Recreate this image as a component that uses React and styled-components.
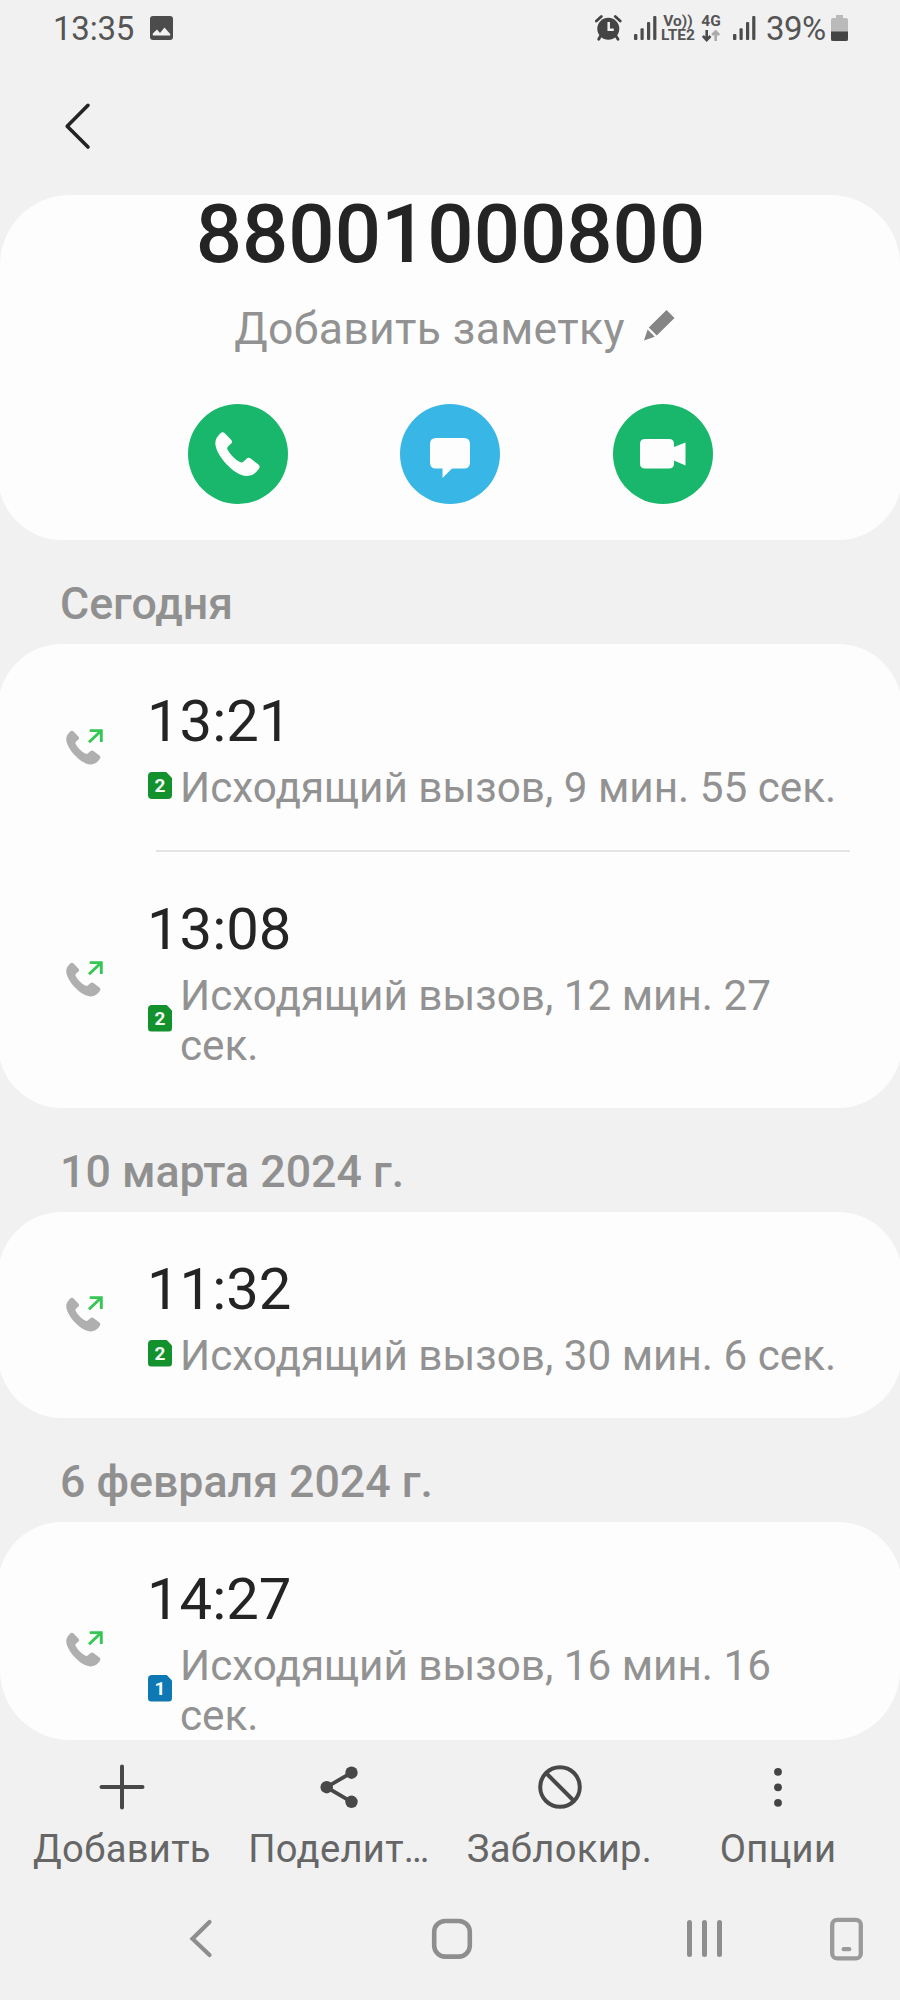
import React from 'react'
import styled, { createGlobalStyle } from 'styled-components'

const GlobalStyle = createGlobalStyle`
    * {
        box-sizing: border-box;
    }

    body {
        margin: 0;
        background: #f1f1f1;
        font-family: Roboto, 'Liberation Sans', sans-serif;
    }

    p, h1, h2 {
        margin: 0;
    }

    svg {
        display: block;
        flex: none;
    }

    button {
        border: none;
        padding: 0;
        background: none;
        font: inherit;
        color: inherit;
    }
`

const Screen = styled.div`
    width: 900px;
    height: 2000px;
    display: flex;
    flex-direction: column;
    overflow: hidden;
    background: #f1f1f1;
`

const StatusBar = styled.div`
    height: 58px;
    padding: 0 52px 2px 53px;
    display: flex;
    align-items: center;
    color: #555;
    font-size: 33px;
    line-height: 38px;

    .clock {
        width: 97px;
        padding-top: 2px;
        letter-spacing: -.2px;
    }

    .spacer {
        flex: 1;
    }

    .percent {
        width: 75px;
        padding: 2px 0 0 10px;
        letter-spacing: -.6px;
    }
`

const NetworkLabel = styled.div`
    width: ${props => props.$width}px;
    height: 28px;
    font-size: 15.5px;
    line-height: 14px;
    font-weight: 700;
    text-align: center;
    white-space: nowrap;

    svg {
        margin: 2px auto 0;
    }
`

const TopBar = styled.div`
    height: 137px;
    padding: 44px 0 0 64px;
`

const History = styled.div`
    height: 1545px;
    overflow: hidden;
    border-radius: 70px;
`

const Card = styled.section`
    margin: 0 -2px;
    padding: 0 2px;
    border-radius: 64px;
    background: #fdfdfd;
`

const ContactCard = styled(Card)`
    height: 345px;
    display: flex;
    flex-direction: column;
    align-items: center;

    h1 {
        height: 83px;
        padding-left: 1px;
        font-size: 81.5px;
        line-height: 79px;
        font-weight: 500;
        color: #242424;
    }

    .note {
        margin-top: 25px;
        padding-left: 9px;
        display: flex;
        font-size: 44.5px;
        letter-spacing: .35px;
        line-height: 52px;
        color: #929292;
    }

    .note svg {
        margin: 7px 0 0 19px;
    }
`

const Actions = styled.div`
    margin-top: 49px;
    display: flex;
    gap: 112.5px;
`

const ActionButton = styled.button`
    width: 100px;
    height: 100px;
    border-radius: 50%;
    display: flex;
    align-items: center;
    justify-content: center;
    background: ${props => props.$color};
`

const DateTitle = styled.h2`
    height: 104px;
    padding: 38px 60px 0;
    font-size: 44.7px;
    line-height: 52px;
    font-weight: 500;
    color: #909090;
`

const CallRow = styled.div`
    display: grid;
    grid-template-columns: 81px 1fr;
    align-items: center;
    padding: 43px 48px 37px 66px;
`

const Divider = styled.div`
    height: 1.5px;
    margin: 0 50px 0 156px;
    background: #e4e4e4;
`

const CallTime = styled.p`
    height: 68px;
    font-size: 58px;
    line-height: 68px;
    color: #242424;
`

const CallDetail = styled.div`
    margin-top: 8px;
    display: flex;
    align-items: center;
    font-size: 42.25px;
    line-height: 50px;
    color: #929292;

    p {
        flex: 1;
        padding-left: 8px;
    }
`

const SimBadge = styled.div`
    width: 24px;
    height: 27px;
    margin: 0 0 5px 1px;
    border-radius: 4px;
    clip-path: polygon(0 0, 76% 0, 100% 22%, 100% 100%, 0 100%);
    background: ${props => props.$sim === 1 ? '#0d78b4' : '#12912c'};
    color: #f4fff4;
    font-size: 19px;
    line-height: 28px;
    font-weight: 700;
    text-align: center;
`

const BottomBar = styled.div`
    height: 138px;
    padding: 0 15px 0 14px;
    display: grid;
    grid-template-columns: 216px 218px 223px 1fr;
`

const BottomButton = styled.button`
    padding-top: 24px;
    display: flex;
    flex-direction: column;
    align-items: center;
    font-size: 38.2px;
    letter-spacing: .3px;
    line-height: 44px;
    color: #666;

    span {
        margin-top: 17px;
        white-space: nowrap;
    }
`

const NavBar = styled.div`
    height: 122px;
    padding-left: 188px;
    display: grid;
    grid-template-columns: 243px 254px 144px auto;
    align-items: center;
`

const HANDSET = 'M5.5 1.2 C6.6 -.1 8.6 -.2 9.8 1.2 L16.3 8 C17.4 9.2 17.3 10.6 16.2 11.6 L13.2 14.2 C12 15.3 12 16.6 12.7 18 C15.5 23 19.8 27.2 24.8 30 C26.2 30.8 27.5 30.6 28.6 29.6 L31.6 26.8 C32.8 25.6 34.4 25.6 35.7 26.6 L43.4 32.6 C44.8 33.8 45 35.2 44 36.6 C41 41.5 36.5 44.2 31.5 44 C25 43.7 18 39 11.8 32.5 C4.8 25 .3 17 .3 11 C.3 7 2.6 4.3 5.5 1.2 Z'

const SignalIcon = () => (
    <svg width='23' height='24' viewBox='0 0 23 24' fill='#4c4c4c'>
        <rect x='0' y='18' width='3.4' height='6' rx='1' />
        <rect x='6.5' y='12.3' width='3.2' height='11.7' rx='1' />
        <rect x='13' y='6' width='3.2' height='18' rx='1' />
        <rect x='19.2' y='0' width='3.2' height='24' rx='1' />
    </svg>
)

const AlarmIcon = () => (
    <svg width='27' height='26' viewBox='0 0 27 26' fill='none' stroke='#444' strokeLinecap='round'>
        <circle cx='13.3' cy='13.7' r='11' fill='#444' stroke='none' />
        <path d='M1.4 6 L6.3 1.5 M25.2 6 L20.3 1.5 M5.5 21 L3.7 24.2 M21 21 L23 24.2' strokeWidth='2.8' />
        <path d='M13.7 7 V14.8 H18.8' stroke='#f1f1f1' strokeWidth='2.5' strokeLinecap='butt' />
    </svg>
)

const OutgoingIcon = styled.svg`
    margin-bottom: 7px;
`

const CallIcon = () => (
    <OutgoingIcon width='38' height='36' viewBox='0 0 38 36'>
        <path d={HANDSET} fill='#afafaf' transform='translate(0 1.5) scale(.77)' />
        <path d='M23 13.3 L34.8 2 M23.7 1.6 H35.3 V13' fill='none' stroke='#35c653' strokeWidth='2.9' />
    </OutgoingIcon>
)

const days = [
    { title: 'Сегодня', calls: [
        { time: '13:21', sim: 2, text: 'Исходящий вызов, 9 мин. 55 сек.' },
        { time: '13:08', sim: 2, text: 'Исходящий вызов, 12 мин. 27 сек.' }
    ] },
    { title: '10 марта 2024 г.', calls: [{ time: '11:32', sim: 2, text: 'Исходящий вызов, 30 мин. 6 сек.' }] },
    { title: '6 февраля 2024 г.', calls: [{ time: '14:27', sim: 1, text: 'Исходящий вызов, 16 мин. 16 сек.' }] }
]

const Call = (props) => {
    const { call } = props
    return (
        <CallRow>
            <CallIcon />
            <div>
                <CallTime>{call.time}</CallTime>
                <CallDetail>
                    <SimBadge $sim={call.sim}>{call.sim}</SimBadge>
                    <p>{call.text}</p>
                </CallDetail>
            </div>
        </CallRow>
    )
}

const Status = () => (
    <StatusBar>
        <div className='clock'>13:35</div>
        <svg width='23' height='24' viewBox='0 0 23 24'>
            <rect width='23' height='24' rx='3' fill='#4c4c4c' />
            <path d='M2.8 19.5 V17.5 L7 13.5 L10 17 L14.5 11.5 L20.2 18 V19.5 Z' fill='#f1f1f1' />
        </svg>
        <div className='spacer' />
        <AlarmIcon />
        <svg width='12' height='1' />
        <SignalIcon />
        <NetworkLabel $width={42}>Vo))<br />LTE2</NetworkLabel>
        <NetworkLabel $width={24}>
            4G
            <svg width='18' height='12' viewBox='0 0 18 12' fill='none' strokeWidth='2.6'>
                <path d='M4.7 0 V9.5 M.9 6 L4.7 10 L8.5 6' stroke='#4c4c4c' />
                <path d='M13.7 11 V2 M10.2 5 L13.7 1.5 L17.2 5' stroke='#aaa' />
            </svg>
        </NetworkLabel>
        <svg width='10' height='1' />
        <SignalIcon />
        <div className='percent'>39%</div>
        <svg width='17' height='26' viewBox='0 0 17 26'>
            <path d='M5 0 H12 V3 H15 Q17 3 17 5 V26 H0 V5 Q0 3 2 3 H5 Z' fill='#bababa' />
            <path d='M0 16.5 H17 V24 Q17 26 15 26 H2 Q0 26 0 24 Z' fill='#444' />
        </svg>
    </StatusBar>
)

const Navigation = () => (
    <NavBar>
        <svg width='26' height='42' viewBox='0 0 26 42' fill='none' stroke='#8e8e8e' strokeWidth='4.2' strokeLinecap='round'>
            <path d='M21.5 4 L4.5 20.7 L21.5 37' />
        </svg>
        <svg width='42' height='42' viewBox='0 0 42 42' fill='none' stroke='#8e8e8e' strokeWidth='4.6'>
            <rect x='3.2' y='3' width='35.6' height='35.6' rx='11' />
        </svg>
        <svg width='38' height='40' viewBox='0 0 38 40' fill='none' stroke='#8e8e8e' strokeWidth='5' strokeLinecap='round'>
            <path d='M4.5 3.5 V35.5 M19.5 3.5 V35.5 M34.5 3.5 V35.5' />
        </svg>
        <svg width='34' height='44' viewBox='0 0 34 44' fill='none' stroke='#9a9a9a' strokeWidth='4.3' strokeLinecap='round'>
            <rect x='3.2' y='2.8' width='28.6' height='38.6' rx='5' />
            <path d='M14.7 32.2 H20.2' />
        </svg>
    </NavBar>
)

const App = () => {
    return (
        <Screen>
            <GlobalStyle />
            <Status />
            <TopBar>
                <svg width='27' height='48' viewBox='0 0 27 48' fill='none' stroke='#242424' strokeWidth='3.6' strokeLinecap='round' strokeLinejoin='round'>
                    <path d='M24 3.3 L3.2 24.2 L24 45' />
                </svg>
            </TopBar>
            <History>
                <ContactCard>
                    <h1>88001000800</h1>
                    <div className='note'>
                        Добавить заметку
                        <svg width='31' height='31' viewBox='0 0 31 31' fill='#858585'>
                            <path d='M22.5 0 L30.5 8 L12.8 25.6 L4.8 17.6 Z M3.6 19.5 L10.8 26.8 L0 30.5 Z' />
                        </svg>
                    </div>
                    <Actions>
                        <ActionButton $color='#18b76b'>
                            <svg width='45' height='44' viewBox='0 0 45 44' fill='#fdfdfd'><path d={HANDSET} /></svg>
                        </ActionButton>
                        <ActionButton $color='#38b6e5'>
                            <svg width='40' height='40' viewBox='0 0 40 40' fill='#fdfdfd' transform='translate(0 4)'>
                                <path d='M6 0 H34 Q40 0 40 6 V24.5 Q40 30.5 34 30.5 H22 L12.5 40 V30.5 H6 Q0 30.5 0 24.5 V6 Q0 0 6 0 Z' />
                            </svg>
                        </ActionButton>
                        <ActionButton $color='#18b76b'>
                            <svg width='46' height='30' viewBox='0 0 46 30' fill='#fdfdfd'>
                                <path d='M5 0 H29 Q34 0 34 5 V8 L45.5 3.5 V26.5 L34 21.5 V24.5 Q34 29.5 29 29.5 H5 Q0 29.5 0 24.5 V5 Q0 0 5 0 Z' />
                            </svg>
                        </ActionButton>
                    </Actions>
                </ContactCard>
                {days.map((day) => (
                    <React.Fragment key={day.title}>
                        <DateTitle>{day.title}</DateTitle>
                        <Card>
                            {day.calls.map((call, i) => (
                                <React.Fragment key={call.time}>
                                    {i > 0 && <Divider />}
                                    <Call call={call} />
                                </React.Fragment>
                            ))}
                        </Card>
                    </React.Fragment>
                ))}
            </History>
            <BottomBar>
                <BottomButton>
                    <svg width='46' height='46' viewBox='0 0 46 46' stroke='#484848' strokeWidth='4' strokeLinecap='round'>
                        <path d='M23 2.5 V43.5 M2.5 23 H43.5' />
                    </svg>
                    <span>Добавить</span>
                </BottomButton>
                <BottomButton>
                    <svg width='46' height='46' viewBox='0 0 46 46' fill='#484848' stroke='#484848' strokeWidth='3.8'>
                        <path d='M35.5 8.7 L10.5 23.2 L35.5 37.8' fill='none' />
                        <g stroke='none'>
                            <circle cx='35.5' cy='8.7' r='6.2' />
                            <circle cx='10.7' cy='23.2' r='6.2' />
                            <circle cx='35.5' cy='37.8' r='6.2' />
                        </g>
                    </svg>
                    <span>Поделит…</span>
                </BottomButton>
                <BottomButton>
                    <svg width='46' height='46' viewBox='0 0 46 46' fill='none' stroke='#484848' strokeWidth='4'>
                        <circle cx='23' cy='23' r='19.8' />
                        <path d='M9 9 L37 37' />
                    </svg>
                    <span>Заблокир.</span>
                </BottomButton>
                <BottomButton>
                    <svg width='46' height='46' viewBox='0 0 46 46' fill='#444'>
                        <circle cx='23' cy='7.8' r='3.9' />
                        <circle cx='23' cy='23.3' r='3.9' />
                        <circle cx='23' cy='38.8' r='3.9' />
                    </svg>
                    <span>Опции</span>
                </BottomButton>
            </BottomBar>
            <Navigation />
        </Screen>
    )
}

export default App
